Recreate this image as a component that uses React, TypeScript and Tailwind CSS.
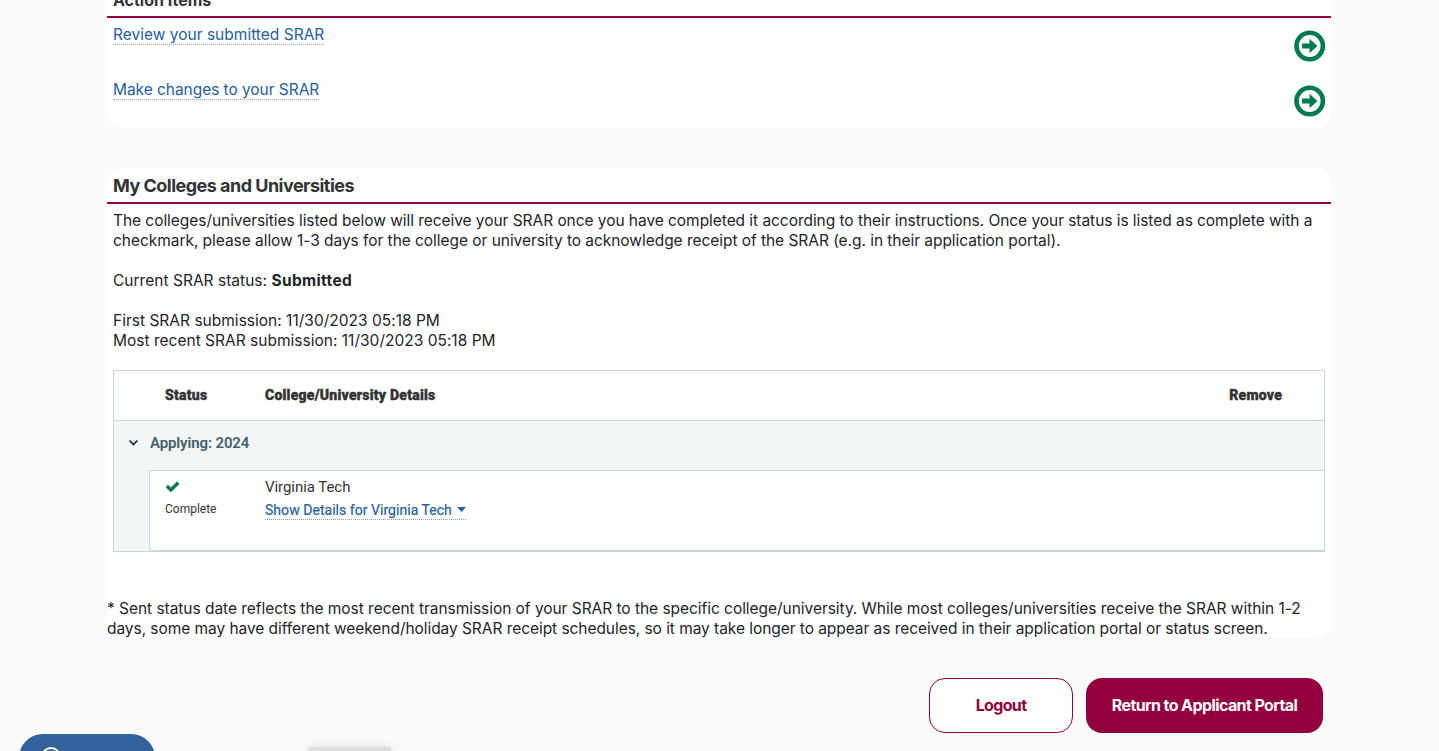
import React from "react";

function ArrowCircle() {
  return (
    <svg width="32" height="32" viewBox="0 0 32 32" aria-hidden="true">
      <circle cx="15.7" cy="16" r="13.2" fill="none" stroke="#007a53" strokeWidth="4.6" />
      <path d="M8 13.4h7.5V8.8L23.4 16l-7.9 7.2v-4.6H8z" fill="#007a53" />
    </svg>
  );
}

function ActionRow({ label, className }: { label: string; className: string }) {
  return (
    <div className="flex h-[55px] items-start justify-between pl-1.5 pr-[5px]">
      <a
        href="#"
        className={`mt-1.5 h-[21px] whitespace-nowrap border-b border-dotted border-[#7ba3cc] text-[15.5px] leading-[21px] text-[#23609f] ${className}`}
      >
        {label}
      </a>
      <span className="mt-3">
        <ArrowCircle />
      </span>
    </div>
  );
}

function CollegeTable() {
  return (
    <div className="mx-1.5 mt-[19px] h-[182px] border border-[#c9d6d9] font-[Roboto,sans-serif] text-[#333]">
      <div className="flex h-[50px] items-center border-b border-[#c9d6d9] pb-0.5 pl-[51px] pr-[42px] text-sm font-black tracking-[0.23px] [-webkit-text-stroke:0.4px_#333]">
        <span className="w-[100px]">Status</span>
        <span className="flex-1">College/University Details</span>
        <span>Remove</span>
      </div>
      <div className="h-[130px] bg-[#f2f6f7]">
        <div className="flex h-[49px] items-center pb-1.5 pl-3.5">
          <svg width="11" height="11" viewBox="0 0 11 11" aria-hidden="true">
            <path d="M1.5 3.5l4 4 4-4" fill="none" stroke="#1c2b30" strokeWidth="1.7" />
          </svg>
          <span className="ml-[11px] text-[15px] font-semibold tracking-[-0.12px] text-[#465e69]">Applying: 2024</span>
        </div>
        <div className="ml-[35px] flex h-[81px] rounded-bl-sm border-b border-l border-t border-[#c9d6d9] bg-white pl-[15px]">
          <div className="w-[100px] pt-2">
            <svg width="15" height="14" viewBox="0 0 15 14" aria-hidden="true">
              <path d="M1.8 7l4.1 3.9L13.2 3.7" fill="none" stroke="#007a53" strokeWidth="3.4" />
            </svg>
            <div className="mt-2 text-xs leading-4">Complete</div>
          </div>
          <div className="flex flex-col items-start pt-1.5">
            <span className="text-[15px] leading-5 tracking-[-0.05px]">Virginia Tech</span>
            <a
              href="#"
              className="mt-[3px] flex h-5 w-[201px] items-center justify-between whitespace-nowrap border-b border-dotted border-[#7ba3cc] text-sm font-normal tracking-[0.04px] text-[#23609f] [-webkit-text-stroke:0.2px_#23609f]"
            >
              Show Details for Virginia Tech
              <svg width="9" height="5" viewBox="0 0 9 5" aria-hidden="true">
                <path d="M0 0h9L4.5 5z" fill="#23609f" />
              </svg>
            </a>
          </div>
        </div>
      </div>
    </div>
  );
}

export default function App() {
  return (
    <div className="flex h-[751px] flex-col overflow-hidden bg-[#fafafa] font-[Inter,sans-serif] text-[15.5px] leading-5 text-[#212529]">
      <main className="ml-[107px] flex h-[734px] w-[1224px] shrink-0 flex-col">
        <section className="h-32 overflow-hidden rounded-b-2xl bg-white">
          <div className="flex h-[18px] items-end border-b-2 border-[#8f003c] pl-1.5">
            <h2 className="mb-1.5 text-[16px] font-bold leading-5 text-[#333]">Action Items</h2>
          </div>
          <ActionRow label="Review your submitted SRAR" className="tracking-[0.01px]" />
          <ActionRow label="Make changes to your SRAR" className="tracking-[-0.05px]" />
        </section>

        <section className="mt-10 h-[470px] rounded-2xl bg-white">
          <h2 className="h-9 border-b-2 border-[#8f003c] pl-1.5 text-[18px] font-bold leading-[35px] tracking-[-0.52px] text-[#333]">
            My Colleges and Universities
          </h2>
          <div className="whitespace-nowrap pl-1.5 pt-[7px]">
            <p className="tracking-[-0.05px]">The colleges/universities listed below will receive your SRAR once you have completed it according to their instructions. Once your status is listed as complete with a</p>
            <p className="tracking-[-0.045px]">checkmark, please allow 1-3 days for the college or university to acknowledge receipt of the SRAR (e.g. in their application portal).</p>
            <p className="mt-5 tracking-[0.02px]">Current SRAR status: <b className="tracking-[0.35px]">Submitted</b></p>
            <p className="mt-5 tracking-[0.01px]">First SRAR submission: 11/30/2023 05:18 PM</p>
            <p className="tracking-[0.01px]">Most recent SRAR submission: 11/30/2023 05:18 PM</p>
          </div>
          <CollegeTable />
          <div className="mt-[47px] whitespace-nowrap">
            <p className="tracking-[-0.04px]">* Sent status date reflects the most recent transmission of your SRAR to the specific college/university. While most colleges/universities receive the SRAR within 1-2</p>
            <p className="tracking-[-0.055px]">days, some may have different weekend/holiday SRAR receipt schedules, so it may take longer to appear as received in their application portal or status screen.</p>
          </div>
        </section>

        <div className="mt-10 flex justify-end gap-[13px] pr-2">
          <button className="h-[55px] w-36 rounded-2xl border border-[#93003d] bg-white pb-0.5 text-[16px] font-bold tracking-[-0.65px] text-[#93003d]">
            Logout
          </button>
          <button className="h-[55px] w-[237px] rounded-2xl bg-[#93003d] pb-0.5 text-[16px] font-bold tracking-[-0.6px] text-white">
            Return to Applicant Portal
          </button>
        </div>
      </main>

      <footer className="flex h-[17px] shrink-0 items-start pl-[19px]">
        <div className="h-12 w-[136px] shrink-0 rounded-full bg-[#33619b] pl-[22px] pt-[13px]">
          <svg width="20" height="20" viewBox="0 0 20 20" aria-hidden="true">
            <circle cx="10" cy="10" r="9" fill="none" stroke="#fff" strokeWidth="1.8" />
            <path d="M7 8a3 3 0 1 1 4 2.8c-.8.4-1 .8-1 1.7M10 14v1.5" fill="none" stroke="#fff" strokeWidth="1.8" />
          </svg>
        </div>
        <div className="ml-[153px] mt-[13px] h-6 w-[83px] shrink-0 rounded-[3px] bg-[#dedede] shadow-[0_0_8px_rgba(0,0,0,0.12)]" />
      </footer>
    </div>
  );
}
